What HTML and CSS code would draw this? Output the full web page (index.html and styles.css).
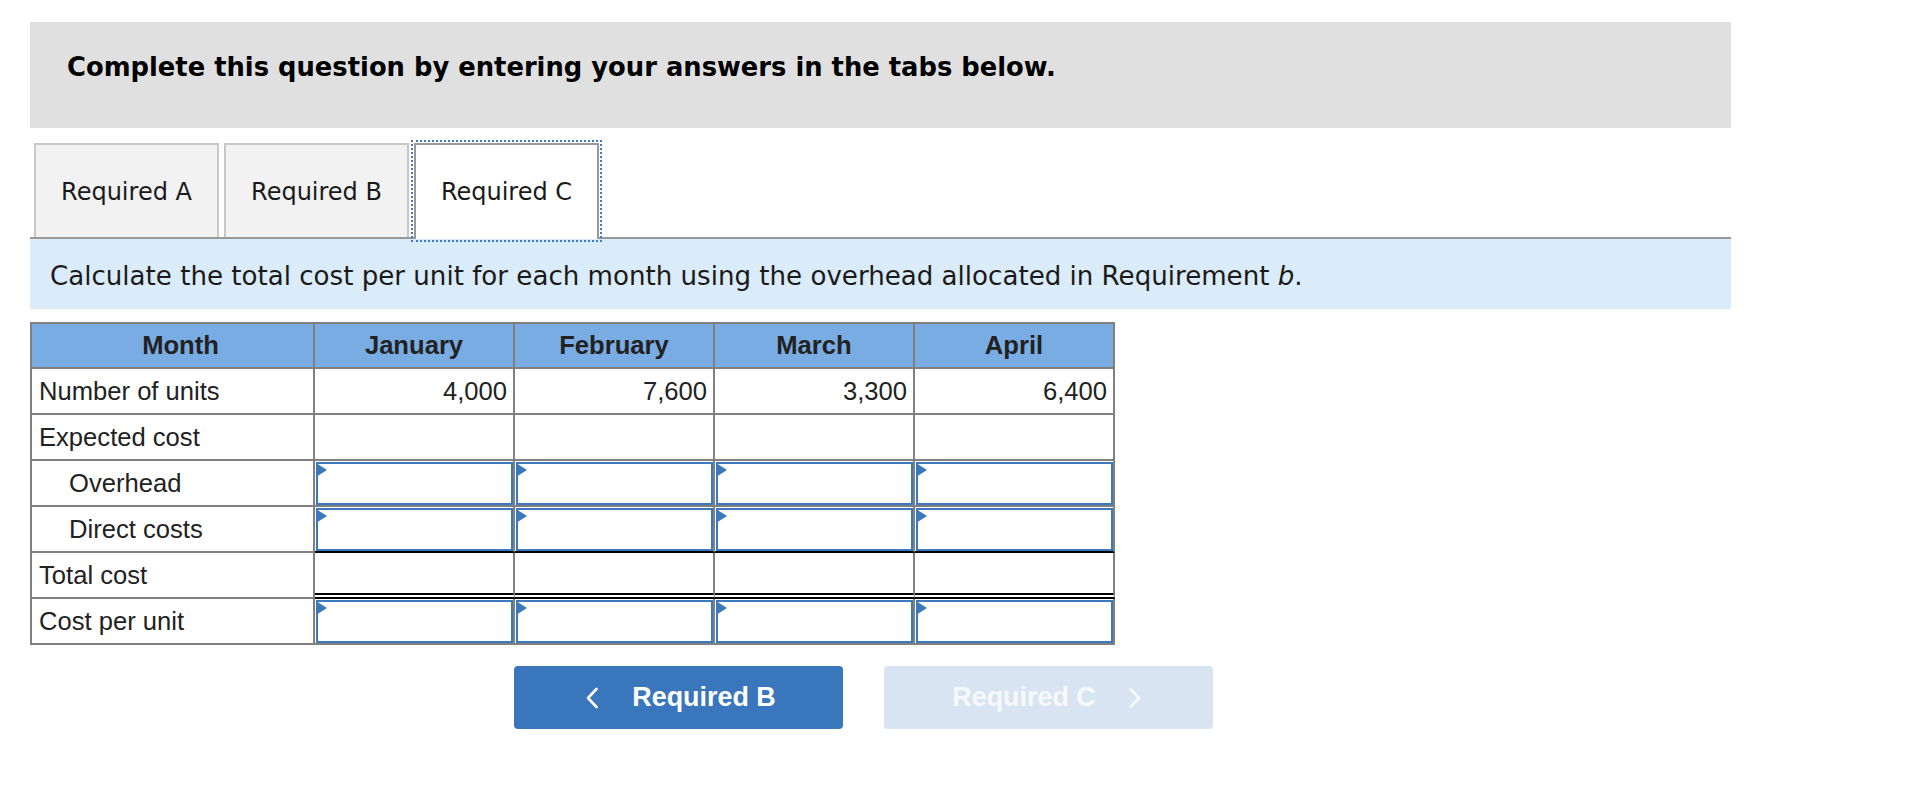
FILE: index.html
```html
<!DOCTYPE html>
<html lang="en">
<head>
<meta charset="utf-8">
<title>Required C</title>
<link rel="stylesheet" href="styles.css">
</head>
<body>
<div class="page">
  <div class="banner">Complete this question by entering your answers in the tabs below.</div>
  <div class="tabs">
    <div class="tab">Required A</div>
    <div class="tab">Required B</div>
    <div class="tab active">Required C</div>
  </div>
  <div class="prompt"><span>Calculate the total cost per unit for each month using the overhead allocated in Requirement <i>b</i>.</span></div>
  <table class="grid">
    <colgroup>
      <col class="c-label">
      <col class="c-month">
      <col class="c-month">
      <col class="c-month">
      <col class="c-month">
    </colgroup>
    <thead>
      <tr><th class="h-label">Month</th><th>January</th><th>February</th><th>March</th><th>April</th></tr>
    </thead>
    <tbody>
      <tr>
        <td class="label">Number of units</td>
        <td class="num">4,000</td><td class="num">7,600</td><td class="num">3,300</td><td class="num">6,400</td>
      </tr>
      <tr>
        <td class="label">Expected cost</td>
        <td></td><td></td><td></td><td></td>
      </tr>
      <tr>
        <td class="label indent">Overhead</td>
        <td class="in"><div class="box"></div></td><td class="in"><div class="box"></div></td><td class="in"><div class="box"></div></td><td class="in"><div class="box"></div></td>
      </tr>
      <tr class="direct">
        <td class="label indent">Direct costs</td>
        <td class="in"><div class="box"></div></td><td class="in"><div class="box"></div></td><td class="in"><div class="box"></div></td><td class="in"><div class="box"></div></td>
      </tr>
      <tr class="total">
        <td class="label">Total cost</td>
        <td></td><td></td><td></td><td></td>
      </tr>
      <tr>
        <td class="label">Cost per unit</td>
        <td class="in"><div class="box"></div></td><td class="in"><div class="box"></div></td><td class="in"><div class="box"></div></td><td class="in"><div class="box"></div></td>
      </tr>
    </tbody>
  </table>
  <div class="nav">
    <button class="btn prev" type="button">
      <svg class="chev" width="12" height="22" viewBox="0 0 12 22"><polyline points="10.5,2 2,11 10.5,20" fill="none" stroke="currentColor" stroke-width="2.6" stroke-linecap="round" stroke-linejoin="round"/></svg>
      <span>Required B</span>
    </button>
    <button class="btn next" type="button">
      <span>Required C</span>
      <svg class="chev" width="12" height="22" viewBox="0 0 12 22"><polyline points="1.5,2 10,11 1.5,20" fill="none" stroke="currentColor" stroke-width="2.6" stroke-linecap="round" stroke-linejoin="round"/></svg>
    </button>
  </div>
</div>
</body>
</html>
```

FILE: styles.css
```css
html, body {
  margin: 0;
  padding: 0;
  background: #ffffff;
}

.page {
  width: 1701px;
  margin: 22px 0 0 30px;
}

.banner {
  box-sizing: border-box;
  height: 106px;
  padding: 30px 0 0 37px;
  background: #e0e0e0;
  font-family: "DejaVu Sans", Verdana, sans-serif;
  font-weight: bold;
  font-size: 25.8px;
  line-height: 30px;
  color: #000;
}

.tabs {
  display: flex;
  align-items: flex-end;
  gap: 5px;
  height: 94px;
  margin-top: 15px;
  padding-left: 4px;
  border-bottom: 2px solid #999999;
}

.tab {
  box-sizing: border-box;
  width: 185px;
  height: 94px;
  padding-top: 2px;
  display: flex;
  align-items: center;
  justify-content: center;
  background: #f2f2f2;
  border: 2px solid #c8c8c8;
  border-bottom: none;
  font-family: "DejaVu Sans", Verdana, sans-serif;
  font-size: 24px;
  color: #1a1a1a;
}

.tab.active {
  height: 96px;
  margin-bottom: -2px;
  padding-bottom: 2px;
  background: #ffffff;
  border-color: #999999;
  outline: 2px dotted #3a7bc8;
  outline-offset: 1px;
  position: relative;
}

.prompt {
  box-sizing: border-box;
  height: 70px;
  padding: 4px 0 0 20px;
  display: flex;
  align-items: center;
  background: #daebf9;
  font-family: "DejaVu Sans", Verdana, sans-serif;
  font-size: 26.1px;
  color: #1a1a1a;
}

.grid {
  margin-top: 13px;
  width: 1085px;
  table-layout: fixed;
  border-collapse: separate;
  border-spacing: 0;
  border-top: 2px solid #808080;
  border-left: 2px solid #808080;
  font-family: "Liberation Sans", Arial, sans-serif;
  font-size: 25.6px;
  color: #222222;
}

.c-label { width: 283px; }
.c-month { width: 200px; }

.grid th,
.grid td {
  box-sizing: border-box;
  padding: 0;
  border-right: 2px solid #808080;
  border-bottom: 2px solid #808080;
}

.grid thead tr { height: 45px; }
.grid tbody tr { height: 46px; }

.grid th {
  background: #79ace3;
  font-weight: bold;
  text-align: center;
  color: #222222;
}

.grid th.h-label {
  padding-left: 16px;
}

.grid td.label {
  padding-left: 7px;
  text-align: left;
  white-space: nowrap;
}

.grid td.indent {
  padding-left: 37px;
}

.grid td.num {
  text-align: right;
  padding-right: 6px;
}

.grid td.in {
  padding: 1px 0 0 1px;
  vertical-align: top;
}

.box {
  position: relative;
  box-sizing: border-box;
  height: 43px;
  border: 2px solid #3b78bc;
  background: #ffffff;
}

.box::before {
  content: "";
  position: absolute;
  left: -2px;
  top: -1px;
  width: 0;
  height: 0;
  border-left: 11px solid #3b78bc;
  border-top: 7.5px solid transparent;
  border-bottom: 7.5px solid transparent;
}

.grid tr.direct td.in {
  border-bottom-color: #000000;
}

.grid tr.total td:not(.label) {
  border-bottom: 6px double #000000;
}

.nav {
  display: flex;
  gap: 41px;
  margin: 21px 0 0 484px;
}

.btn {
  box-sizing: border-box;
  width: 329px;
  height: 63px;
  padding: 0;
  border: none;
  border-radius: 4px;
  display: flex;
  align-items: center;
  justify-content: center;
  gap: 34px;
  font-family: "Liberation Sans", Arial, sans-serif;
  font-weight: bold;
  font-size: 26.9px;
  color: #ffffff;
}

.btn.prev {
  background: #3a76bb;
  padding-left: 5px;
}

.btn.next {
  background: #d8e4f2;
  color: #f6f9fd;
  gap: 33px;
  padding-right: 4px;
}

.chev {
  display: block;
  flex: none;
}
```
